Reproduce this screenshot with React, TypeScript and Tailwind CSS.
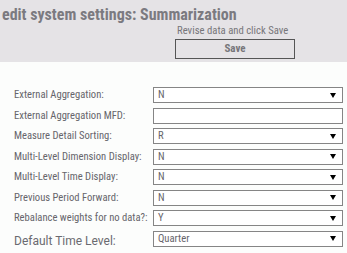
const rows: { label: string; value: string; select: boolean; big?: boolean }[] = [
  { label: 'External Aggregation:', value: 'N', select: true },
  { label: 'External Aggregation MFD:', value: '', select: false },
  { label: 'Measure Detail Sorting:', value: 'R', select: true },
  { label: 'Multi-Level Dimension Display:', value: 'N', select: true },
  { label: 'Multi-Level Time Display:', value: 'N', select: true },
  { label: 'Previous Period Forward:', value: 'N', select: true },
  { label: 'Rebalance weights for no data?:', value: 'Y', select: true },
  { label: 'Default Time Level:', value: 'Quarter', select: true, big: true },
]

const narrow = "font-['Roboto_Condensed','Liberation_Sans_Narrow','Arial_Narrow',Roboto,sans-serif]"

export default function App() {
  return (
    <div className={`w-[347px] h-[253px] overflow-hidden bg-[#fcfdfc] ${narrow}`}>
      <div className="h-[62px] bg-[#e5e3e6]">
        <h1 className="pl-[2px] pt-[5px] text-[16px] leading-[19px] font-bold text-[#7b7a80] whitespace-nowrap">
          edit system settings: Summarization
        </h1>
        <div className="flex flex-col items-start pl-[175px]">
          <p className="pl-[2px] text-[10.7px] leading-[14px] text-[#77767a] whitespace-nowrap">
            Revise data and click Save
          </p>
          <button className="mt-[1px] w-[120px] h-[20px] border border-[#555] bg-[#e5e3e6] text-[11px] font-bold text-[#77767a]">
            Save
          </button>
        </div>
      </div>
      <div className="pt-[25px] flex flex-col gap-[4.5px]">
        {rows.map((r) => (
          <div key={r.label} className="flex items-center h-[16px]">
            <div
              className={
                r.big
                  ? "w-[153px] pl-[14px] text-[12px] text-[#6a6a70] whitespace-nowrap font-['Roboto',sans-serif] mt-[4px]"
                  : 'w-[153px] pl-[14px] text-[10.6px] text-[#66656b] whitespace-nowrap'
              }
            >
              {r.label}
            </div>
            <div className="w-[190px] h-[16px] border border-[#858585] bg-white flex items-center justify-between pl-[4px] pr-[6px]">
              <span className="text-[10.6px] leading-[14px] text-[#66656b]">{r.value}</span>
              {r.select && (
                <span className="w-0 h-0 border-l-[3px] border-r-[3px] border-t-[5px] border-l-transparent border-r-transparent border-t-black" />
              )}
            </div>
          </div>
        ))}
      </div>
    </div>
  )
}
